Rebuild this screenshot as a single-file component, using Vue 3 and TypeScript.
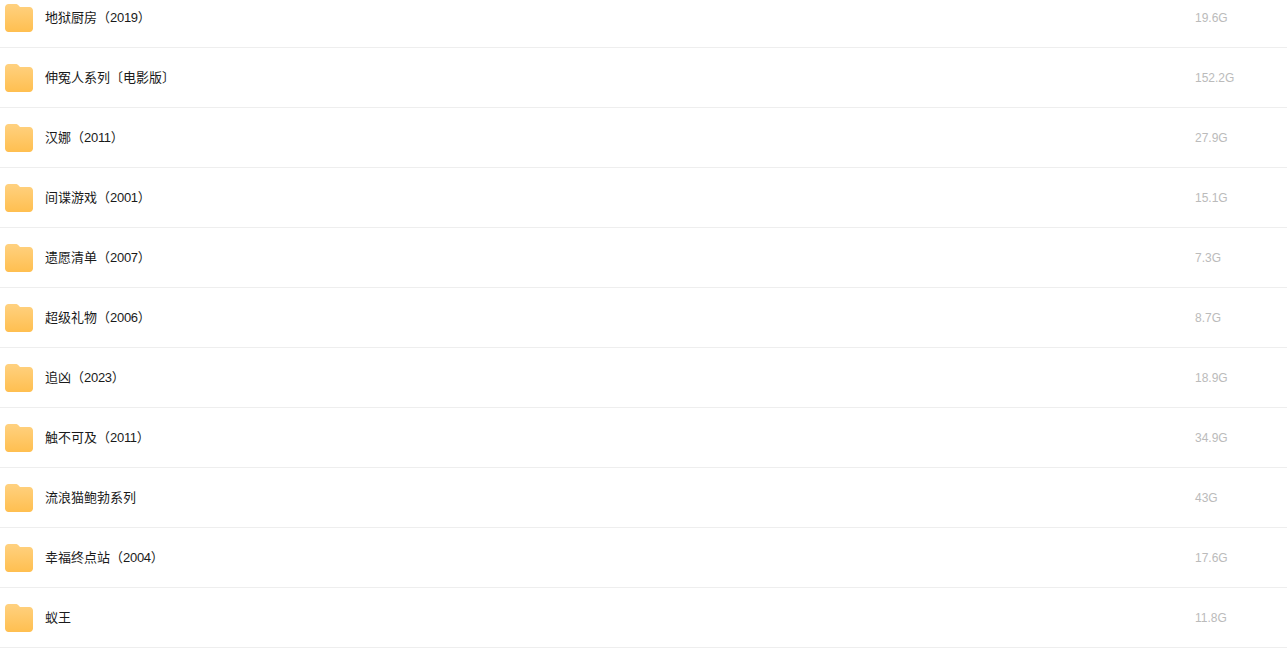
<script setup lang="ts">
interface FolderRow {
  name: string
  year?: string
  size: string
}

const rows: FolderRow[] = [
  { name: '地狱厨房', year: '2019', size: '19.6G' },
  { name: '伸冤人系列〔电影版〕', size: '152.2G' },
  { name: '汉娜', year: '2011', size: '27.9G' },
  { name: '间谍游戏', year: '2001', size: '15.1G' },
  { name: '遗愿清单', year: '2007', size: '7.3G' },
  { name: '超级礼物', year: '2006', size: '8.7G' },
  { name: '追凶', year: '2023', size: '18.9G' },
  { name: '触不可及', year: '2011', size: '34.9G' },
  { name: '流浪猫鲍勃系列', size: '43G' },
  { name: '幸福终点站', year: '2004', size: '17.6G' },
  { name: '蚁王', size: '11.8G' }
]
</script>

<template>
  <div class="list">
    <div v-for="row in rows" :key="row.name" class="row">
      <svg class="folder" width="28" height="28" viewBox="0 0 28 28">
        <defs>
          <linearGradient id="folderFill" x1="0" y1="0" x2="0" y2="1">
            <stop offset="0" stop-color="#ffd180" />
            <stop offset="1" stop-color="#ffbf50" />
          </linearGradient>
        </defs>
        <path
          d="M3.5 0H10.5C11.8 0 12.6.5 13.4 1.3L15 3H24.5C26.4 3 28 4.6 28 6.5V24.5C28 26.4 26.4 28 24.5 28H3.5C1.6 28 0 26.4 0 24.5V3.5C0 1.6 1.6 0 3.5 0Z"
          fill="url(#folderFill)"
        />
      </svg>
      <span class="name">
        {{ row.name }}<template v-if="row.year">（<span class="year">{{ row.year }}</span>）</template>
      </span>
      <span class="size">{{ row.size }}</span>
    </div>
  </div>
</template>

<style scoped>
.list {
  margin-top: -12px;
  font-family: "Liberation Sans", "Noto Sans CJK SC", sans-serif;
}

.row {
  display: flex;
  align-items: center;
  box-sizing: border-box;
  height: 60px;
  padding-left: 5px;
  border-bottom: 1px solid #eeeeee;
}

.folder {
  flex: none;
  margin-top: 1px;
  margin-right: 12px;
}

.name {
  flex: 1;
  margin-bottom: 2px;
  font-size: 13px;
  color: #1a1a1a;
}

.year {
  letter-spacing: -0.3px;
}

.size {
  width: 92px;
  font-size: 12px;
  color: #bbbbbb;
}
</style>

<style>
html,
body {
  background: #ffffff;
  overflow: hidden;
}
</style>
